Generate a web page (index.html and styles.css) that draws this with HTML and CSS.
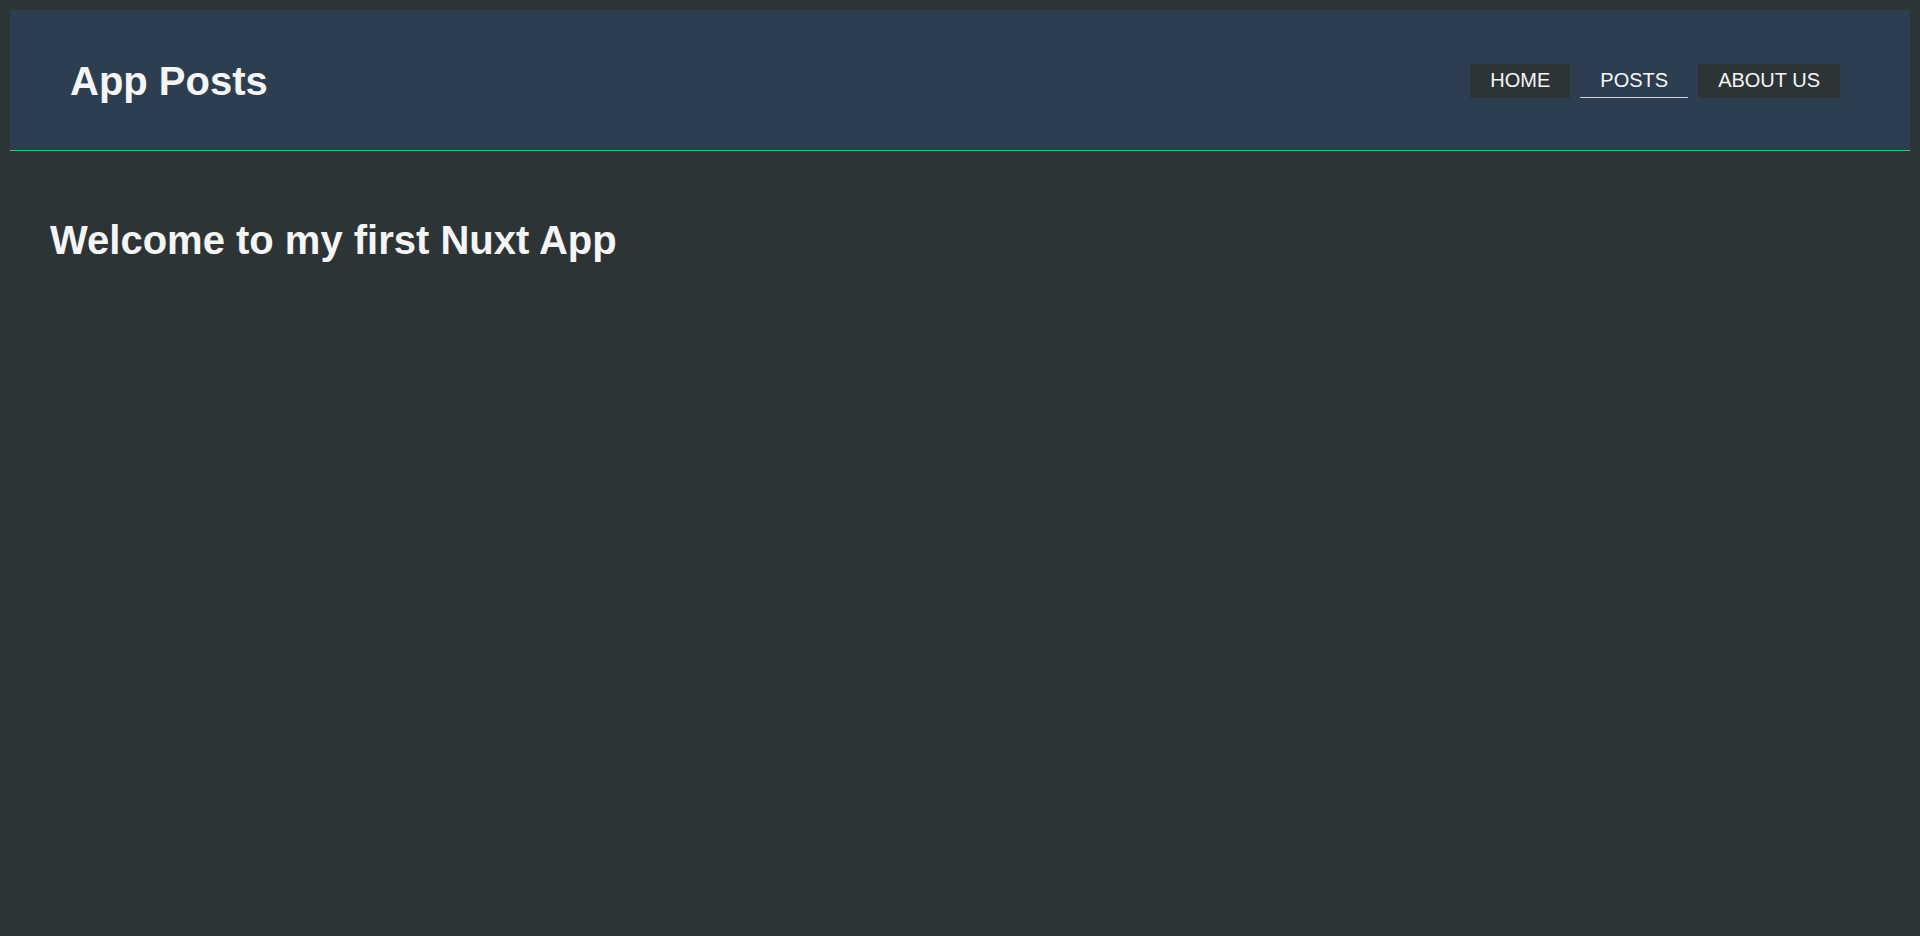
FILE: index.html
```html
<!DOCTYPE html>
<html lang="en">
<head>
<meta charset="utf-8">
<title>App Posts</title>
<link rel="stylesheet" href="styles.css">
</head>
<body>
<div class="layout">
  <header class="header">
    <div class="brand">App Posts</div>
    <nav class="nav">
      <a class="nav-link" href="#">HOME</a>
      <a class="nav-link active" href="#">POSTS</a>
      <a class="nav-link" href="#">ABOUT US</a>
    </nav>
  </header>
  <main class="main">
    <h1 class="title">Welcome to my first Nuxt App</h1>
  </main>
</div>
</body>
</html>
```
FILE: styles.css
```css
html, body {
  margin: 0;
  padding: 0;
  background: #2d3436;
  color: #f5f5f5;
  font-family: "Liberation Sans", Arial, sans-serif;
  min-height: 100%;
}
.layout {
  padding: 10px;
}
.header {
  display: flex;
  align-items: center;
  justify-content: space-between;
  height: 140px;
  padding: 0 60px;
  background: #2c3e50;
  border-bottom: 1px solid #2ecc71;
}
.brand {
  font-size: 40px;
  font-weight: bold;
  color: #f5f5f5;
  padding-top: 2px;
}
.nav {
  display: flex;
  align-items: center;
  padding-top: 2px;
}
.nav-link {
  display: block;
  margin-right: 10px;
  padding: 5px 20px 5px;
  font-size: 20px;
  line-height: 23px;
  color: #f5f5f5;
  text-decoration: none;
  background: #2d3436;
  border-bottom: 1px solid transparent;
}
.nav-link.active {
  background: transparent;
  border-bottom-color: #c9d1dc;
}
.main {
  padding: 66px 40px 0;
}
.title {
  margin: 0;
  font-size: 40px;
  font-weight: bold;
  line-height: 46px;
  color: #f5f5f5;
}
```
